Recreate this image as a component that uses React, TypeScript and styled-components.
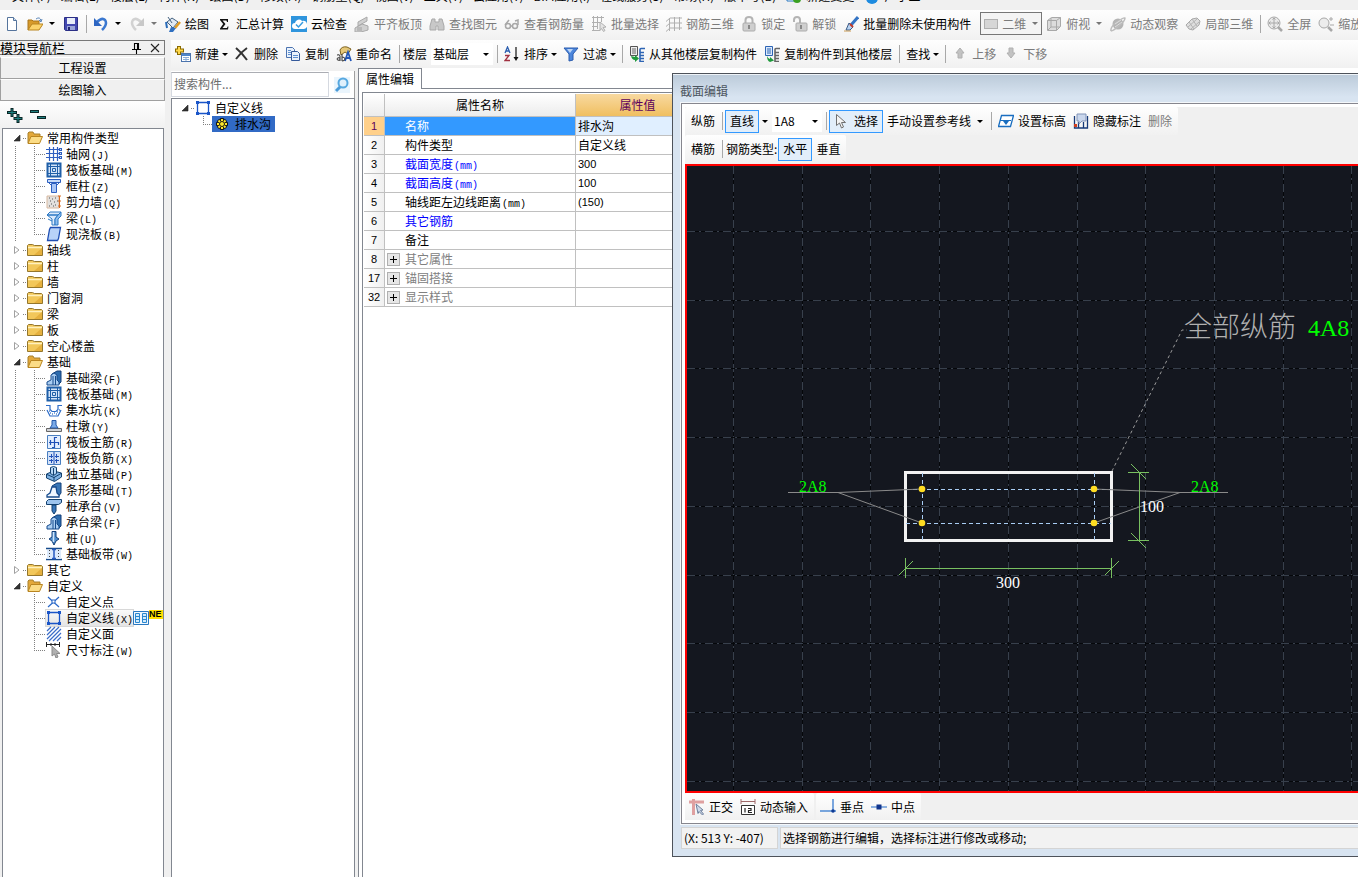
import React from "react";
import styled, { createGlobalStyle, css } from "styled-components";

const UI = `"Noto Sans CJK SC", "Noto Sans", sans-serif`;

const GlobalStyle = createGlobalStyle`
  * { box-sizing: border-box; }
  body { margin: 0; background: #f0f0f0; color: #000; font: 12px/16px ${UI}; }
  button, input, select { font: inherit; color: inherit; margin: 0; }
  button { border: 0; background: none; padding: 0; cursor: default; }
  ul { list-style: none; margin: 0; padding: 0; }
`;

/* ---------- icons, all on a 16 x 16 grid ---------- */

const leafBlue = "#1f5fa8";
const steel = "#4a7fc0";

const art: Record<string, React.ReactNode> = {
  newDoc: <><path d="M3.500 1.500h6l3 3v10h-9z" fill="#fff" stroke="#55749c" /><path d="M9.500 1.500v3h3" fill="#cfe0f5" stroke="#55749c" /></>,
  open: <><path d="M1 14V4h4l1 1h6v3" fill="#d79a2a" stroke="#a8741a" /><path d="M1 14l4-6h11l-4 6z" fill="#fbd36b" stroke="#b98520" /><path d="M9 3q4-3 5 2m-2-1l2 2 1-3" fill="none" stroke="#5c86b8" /></>,
  save: <><path d="M1.500 1.500h13v13h-12l-1-1z" fill="#4348b0" stroke="#2b2f86" /><path d="M4 2h8v6H4z" fill="#e8edf8" /><path d="M4 10h8v4H4z" fill="#9aa5d8" /><path d="M5 11h2v3H5z" fill="#22266e" /></>,
  undo: <><path d="M4 6q5-5 8-2 3 4-3 10" fill="none" stroke="#3b78d0" strokeWidth="2.500" /><path d="M1 2v8h8z" fill="#2e66c2" /></>,
  redo: <><path d="M12 6Q7 1 4 4q-3 4 3 10" fill="none" stroke="#d2d2d2" strokeWidth="2.500" /><path d="M15 2v8H7z" fill="#c8c8c8" /></>,
  paint: <><path d="M2 6l5-4 6 4-5 6z" fill="#dfe8f2" stroke="#44617f" /><path d="M3 1l4 6" stroke="#44617f" /><path d="M1 6l1 6" stroke="#2b6cb8" strokeWidth="2" /><path d="M15 6l-5 6" stroke="#e09a20" strokeWidth="2.500" /><path d="M6 11l5 1-3 4H4z" fill="#2f6fc0" /></>,
  sigma: <path d="M4 3h8v3h-1l-.5-1.500H6.500L9.500 8l-3 4h4.500l.6-1.600H12.500L12 13.500H4v-1L7.200 8 4 4z" fill="#111" />,
  cloud: <><path d="M0 0h16v16H0z" fill="#2f95dd" /><path d="M4 13a3 3 0 010-6 4 4 0 017-2 4 4 0 012 8z" fill="#fff" /><path d="M5 8.500l2.500 2.500L12 6" fill="none" stroke="#3b9de0" strokeWidth="1.500" /></>,
  align: <><path d="M4 6l9-5v4l-9 5zM1 12l7-4 6 2v4l-7 2H1z" fill="#d0d0d0" stroke="#a9a9a9" /><path d="M3 11h5v4H3z" fill="#b8b8b8" /></>,
  find: <path d="M3 3h3v3h4V3h3l2 7v4H9v-4H7v4H1v-4z" fill="#c8c8c8" stroke="#a9a9a9" />,
  glasses: <g fill="none" stroke="#a8a8a8" strokeWidth="1.500"><circle cx="4" cy="10" r="2.500" /><circle cx="11" cy="10" r="2.500" /><path d="M1 9l4-5M14 9V4l-3 1M6.500 10h2" /></g>,
  batch: <g fill="none" stroke="#b0b0b0"><path d="M1 1.500h12M1 6.500h8M1 10.500h6M2.500 0v14M6.500 0v13M10.500 0v6M1 14.500h8" /><path d="M9 6l6 5-3 .5 2 3-1.500 1-2-3-1.500 2z" fill="#e4e4e4" /></g>,
  rebar3d: <g fill="none" stroke="#b0b0b0"><path d="M0 5.500L4 2h12M0 10.500L4 7h12M0 15.500L4 12h12M3.500 2v13M8.500 1v14M13.500 1v13" /></g>,
  lock: <><path d="M4.500 8V4q0-3 3.500-3t3.500 3v4" fill="none" stroke="#b4b4b4" strokeWidth="2" /><rect x="2" y="7" width="12" height="8" rx="1" fill="#cfcfcf" stroke="#acacac" /><path d="M8 9v4" stroke="#888" strokeWidth="2" /></>,
  unlock: <><path d="M2 6V4q0-3 3-3t3 3v3" fill="none" stroke="#b4b4b4" strokeWidth="2" /><rect x="4" y="7" width="11" height="8" rx="1" fill="#cfcfcf" stroke="#acacac" /><path d="M9 9v4" stroke="#888" strokeWidth="2" /></>,
  brush: <><path d="M15 1L8 9" stroke="#3474c4" strokeWidth="3" /><path d="M6 7l4 4-3 3H3z" fill="#b9d4f2" stroke="#3a5b86" /><path d="M7 8l3 3" stroke="#c23a2a" strokeWidth="2" /><path d="M1 15h7" stroke="#c99a52" /></>,
  flat: <rect x="1.500" y="3.500" width="13" height="9" fill="#d6d6d6" stroke="#b0b0b0" />,
  cube: <><path d="M1.500 4.500l4-3h9v9l-4 4h-9z" fill="#dcdcdc" stroke="#a8a8a8" /><path d="M1.500 4.500h9v10M10.500 4.500l4-3M5 2v9l-3 3M5 11h9" fill="none" stroke="#a8a8a8" /></>,
  orbit: <><circle cx="8" cy="8" r="5.500" fill="#b4b4b4" /><path d="M1 15q-1-4 6-9t8-4q0 3-6 8t-8 5" fill="none" stroke="#bcbcbc" strokeWidth="1.500" /><path d="M5 8l6-4M5 11l7-5" stroke="#dcdcdc" /></>,
  local3d: <><path d="M1 9l6-6 5-1 3 3-1 4-6 5-4-1z" fill="#dedede" stroke="#a8a8a8" /><path d="M4 6l5 7M7 3l5 7M3 11l9-8M6 13l8-7" stroke="#b4b4b4" /></>,
  full: <g fill="none" stroke="#a8a8a8"><circle cx="7" cy="7" r="6" fill="#e9e9e9" /><path d="M7 2v10M2 7h10M5.500 3.500L7 2l1.500 1.500M5.500 10.500L7 12l1.500-1.500M3.500 5.500L2 7l1.500 1.500M10.500 5.500L12 7l-1.500 1.500" /><path d="M11 11l4 4" strokeWidth="2.500" /></g>,
  zoom: <g fill="none" stroke="#a8a8a8"><circle cx="6" cy="7" r="5" fill="#ececec" /><path d="M10 11l4 4" strokeWidth="2.500" /><path d="M11 3h4M13 1v4M12 9h4" /></g>,
  create: <><path d="M4 0v9M0 4.500h9" stroke="#8a6a00" strokeWidth="4" /><path d="M4 1v7M1 4.500h7" stroke="#ffd84a" strokeWidth="2" /><rect x="6.500" y="7.500" width="9" height="8" fill="#fff" stroke="#4c74ad" /><path d="M7 9h8" stroke="#4f86cc" strokeWidth="2" /><path d="M8 11.500h6M8 13.500h6M11 11v4" stroke="#8badd8" /></>,
  cross: <path d="M2 2q6 5 11 12M13 2Q7 6 2 13" fill="none" stroke="#333" strokeWidth="2" />,
  copy: <><path d="M1.500 1.500h6l2 2v8h-8z" fill="#eaf2fc" stroke="#4b73b0" /><path d="M6.500 5.500h6l2 2v7h-8z" fill="#eaf2fc" stroke="#34599a" /><path d="M3 4.500h3M3 6.500h3M3 8.500h3M8 9.500h5M8 11.500h5" stroke="#5d8fd0" /></>,
  rename: <><path d="M4 4q2-4 7-3l4 2-3 5-3-2-4 3z" fill="#e6c878" stroke="#7c6222" /><path d="M9 15l3-9 3 9M10 12h4" fill="none" stroke="#2156b8" strokeWidth="1.800" /><path d="M1 9q3-1 3 1v5M4 12q-3-1-3 1t3 1M6 8v7q3 0 3-2t-3-2" fill="none" stroke="#333" /></>,
  sort: <><path d="M1 7l2.500-6L6 7M2 5h3" fill="none" stroke="#2d5fb0" strokeWidth="1.300" /><path d="M1 9.500h4l-4 5h5" fill="none" stroke="#a03040" strokeWidth="1.300" /><path d="M12 1v12" stroke="#111" strokeWidth="1.200" /><path d="M9.500 11h5L12 15z" fill="#111" /></>,
  filter: <><path d="M1 2h14l-5 6v6l-4 1V8z" fill="#4c86dc" stroke="#2b5cae" /><path d="M4 3h6L7 7z" fill="#bcd5f6" /></>,
  copyFrom: <><path d="M1.500.5h7v9h-7z" fill="#eee" stroke="#555" /><path d="M3 3h4M3 5h4M3 7h4" stroke="#666" /><path d="M2 10l4 1V9l4 3.500L6 16v-2q-3 0-4-4z" fill="#1f9a3c" /><path d="M16 2.500h-4q-1 0-1 1v12h4M11 6.500h4M11 9.500h4M11 12.500h4" fill="none" stroke="#2d64b4" strokeWidth="1.600" /></>,
  copyTo: <><path d="M1.500.5h7v9h-7z" fill="#dbe9fb" stroke="#2d64b4" /><path d="M3 3h4M3 5h4M3 7h4" stroke="#2d64b4" /><path d="M3 10q1 3 3 3V11l4 3.500L6 16q-3-1-3-6z" fill="#1f9a3c" /><path d="M16 2.500h-4q-1 0-1 1v12h4M11 6.500h4M11 9.500h4M11 12.500h4" fill="none" stroke="#666" strokeWidth="1.600" /></>,
  up: <path d="M8 2l4 5h-2v5H6V7H4z" fill="#c2c2c2" stroke="#b0b0b0" />,
  down: <path d="M8 12L4 7h2V2h4v5h2z" fill="#c2c2c2" stroke="#b0b0b0" />,
  search: <><circle cx="9" cy="6" r="4.500" fill="#dff0fc" stroke="#56a8e0" strokeWidth="2" /><path d="M6 10l-4 4" stroke="#4b9bd8" strokeWidth="3" /></>,
  folder: <><path d="M.5 13.500V3.500l1-1h4l2 1h7l1 1v9z" fill="#f2c75a" stroke="#94762c" /><path d="M1 5.500h14" stroke="#fff0bd" strokeWidth="1.500" /><path d="M7 13h8V6z" fill="#dca02c" opacity=".6" /></>,
  folderOpen: <><path d="M1 13V3l1-1h4l1 2h6v3" fill="#e3a83a" stroke="#a8802c" /><path d="M1 13.500l3-7h11.500l-3 7z" fill="#fbdc86" stroke="#b98520" /></>,
  grid: <path d="M3.500 1v14M7.500 1v14M11.500 1v14M0 3.500h13M0 7.500h13M0 11.500h13M13.500 2.500h2v2h-2zM13.500 6.500h2v2h-2zM13.500 10.500h2v2h-2z" fill="none" stroke="#2f5fc0" strokeWidth="1.200" />,
  raft: <g fill="none" stroke={leafBlue}><rect x="1.500" y="1.500" width="13" height="13" fill="#d3e4f8" strokeWidth="2" /><path d="M4.500 2v12M11.500 2v12M2 4.500h12M2 11.500h12M6.500 6.500h3v3h-3z" /></g>,
  column: <><path d="M1.500 1.500h13v3h-13z" fill="#c9dcf8" stroke="#2c5fc0" /><path d="M5.500 5.500h5v9h-5z" fill="#a9c6f6" stroke="#2c5fc0" /><path d="M3 5l2 2M13 5l-2 2" stroke="#2c5fc0" /></>,
  shear: <><path d="M1 2h12v12H1z" fill="#e3e0dd" stroke="#d8b9a0" /><path d="M3 4h1M6 5h1M9 4h1M4 7h1M8 8h1M5 10h1M9 11h1M3 12h1M11 7h1M7 12h1" stroke="#555" /><path d="M12 2h3M13.500 2v12M12 7h3M12 12h3" stroke="#d86a20" /></>,
  beam: <><path d="M1 5l3-3h11l-3 3zM1 5l5 4v6h3V9l3-4z" fill="#dceafb" stroke="#2c78c4" /><path d="M12 5l3-3v4l-3 3v6H9V9z" fill="#8dbdee" stroke="#2c78c4" /><path d="M2 9l4 2" stroke="#2c78c4" /></>,
  slab: <path d="M4.500 1.500h10l-2 11-1 2h-10l2-11z" fill="#b8d2f8" stroke="#1f4fb4" strokeWidth="1.300" />,
  footBeam: <><path d="M6 4l5-3h4v11l-3 3z" fill="#2d6cae" stroke="#123f78" /><path d="M1 15v-3l4-2V5l3-2 3 2v5l2 2v3z" fill="#a9cdf2" stroke="#174b8c" /><path d="M7 6v9M9.500 6v9" stroke="#174b8c" /></>,
  pit: <><path d="M0 3.500h4v4l2 2h4l2-2v-4h4M1 8l3 6h8l3-6" fill="none" stroke="#2c6cc8" strokeWidth="1.200" /><path d="M3 9h1M4 11h1M6 12h1M8 11h1M10 12h1M11 10h1M13 8h1" stroke="#4f86d0" strokeWidth="1.300" /></>,
  pier: <><path d="M.5 10.500h15v3H.5z" fill="#d0d4da" stroke="#666" /><path d="M4 10l2-3V2.500h4V7l2 3z" fill="#7aaae8" stroke="#2458a8" /></>,
  mainBar: <><path d="M1.500 1.500h13v13h-13z" fill="#e4efff" stroke={steel} /><path d="M8.500 3v11M8.500 3.500H11M3 8.500h10M4.500 6v5M12.500 8v3M6 13.500h2.500" fill="none" stroke="#2050b8" strokeWidth="1.200" /></>,
  negBar: <><path d="M1.500 1.500h13v13h-13z" fill="#d3e2f8" stroke={steel} /><path d="M8 2v12M3 6.500h4M9 6.500h4M3 10.500h4M9 10.500h4M5.500 4v4M10.500 4v4M5.500 9v4M10.500 9v4" fill="none" stroke="#2050b8" /></>,
  isolated: <><path d="M0.500 8l7-3 8 2v4l-7 4.500-8-3.500z" fill="#7fb2e4" stroke="#12406e" /><path d="M1 8.500l7 3 7-4M8 11v4" fill="none" stroke="#12406e" /><path d="M4.500 1.500l3-1 3 1v6l-3 2-3-2z" fill="#b8d8f6" stroke="#12406e" /><path d="M7.500 2v7" stroke="#12406e" /></>,
  strip: <><path d="M6 4l5-3h4v10l-3 4z" fill="#3976b6" stroke="#123f78" /><path d="M1 15v-2l3-2 2-6h4l1 6 2 2v2z" fill="#eef6ff" stroke="#174b8c" strokeWidth="1.300" /></>,
  cap: <><path d="M.5 3.500l2-2h13v3l-3 2H.5z" fill="#9cc4ee" stroke="#12406e" /><path d="M6 7h4v6l-2 3-2-3z" fill="#3a78bc" stroke="#12406e" /></>,
  pile: <><path d="M6 1.500h4V7l3 2-3 2-2 4-2-4-3-2 3-2z" fill="#4d8ccc" stroke="#123f78" /><path d="M7.500 2v10" stroke="#d2e6fa" strokeWidth="1.500" /></>,
  band: <><path d="M0 2.500h16M0 13.500h16" stroke="#174b8c" strokeWidth="1.500" /><path d="M1 4h14v9H1z" fill="#dceafb" /><path d="M6 3.500h4M6 12.500h4M8 4v9" stroke="#2458c0" strokeWidth="1.500" /><path d="M3.500 4v9M12.500 4v9" stroke="#444" strokeDasharray="1 2" /></>,
  point: <><path d="M2 3l11 10M13 3L2 13" stroke="#2a68c8" strokeWidth="1.200" /><path d="M6 6h3v3H6z" fill="#fff" stroke="#2a68c8" /></>,
  line: <><path d="M2.500 3v10M13.500 3v10M3 2.500h10M3 13.500h10" stroke="#1a55c8" strokeWidth="1.300" /><path d="M1 1h3v3H1zM12 1h3v3h-3zM1 12h3v3H1zM12 12h3v3h-3z" fill="#1a55c8" /></>,
  area: <path d="M1 5l4-4M1 9l8-8M1 13l12-12M3 15L15 3M7 15l8-8M11 15l4-4" stroke="#3a6cc8" strokeWidth="1.200" />,
  dims: <><path d="M0 2.500h14M.5 0v5M13.500 0v5M5 1v3M9 1v3" stroke="#222" /><path d="M6 4v10l2.500-2 1.500 4 2-1-1.500-3.500H14z" fill="#b0b0b0" stroke="#8a8a8a" /></>,
  gear: <><path d="M8 2v12M2 8h12M4 4l8 8M12 4l-8 8" stroke="#111" strokeWidth="3.500" /><path d="M8 3v10M3 8h10M4.500 4.500l7 7M11.500 4.500l-7 7" stroke="#ffe92e" strokeWidth="2" /><circle cx="8" cy="8" r="2.500" fill="#ffe92e" stroke="#111" /></>,
  pointer: <path d="M2.500 1.500v11l3-2.500 2 5 2-1-2-4.500h4z" fill="#f4f4f4" stroke="#707070" />,
  level: <><path d="M3.500 2.500h12l-3 11H.5z" fill="#fff" stroke="#1a6ec0" strokeWidth="1.300" /><path d="M2 7.500h11" stroke="#1a6ec0" /><path d="M5 8h6l-3 4z" fill="#1a6ec0" /></>,
  hide: <><path d="M1.500 3v12h13V3M5.500 9v6M10.500 9v6" fill="none" stroke="#173a78" strokeWidth="1.300" /><path d="M4 1h9v7H9l-3 3V8H4z" fill="#c9d6ec" stroke="#8093b8" /><path d="M1 11h3v3H1z" fill="#d04020" /></>,
  ortho: <><path d="M0 3h15M4.500 0v16" stroke="#dfa0a0" strokeWidth="3" /><path d="M7 5l7 6-2.500.5 3 3.500-1 1-3.500-3.500-1 2z" fill="#cfd9e8" stroke="#6c7f9c" /></>,
  dyn: <><path d="M1 0v5M15 0v5M1 2.500h14" stroke="#a06a6a" /><path d="M1.500 6.500h13v9h-13z" fill="#fff" stroke="#333" /><path d="M5 9v4.500M8 9.500h3v2H8.500v2H12" fill="none" stroke="#222" strokeWidth="1.200" /></>,
  perp: <><path d="M13 0v12M0 12h16" stroke="#4f8ad4" strokeWidth="1.500" /><circle cx="13" cy="12" r="1.800" fill="#0d3a94" /></>,
  mid: <><path d="M0 8h16" stroke="#6a9ad8" strokeWidth="1.500" /><path d="M5.500 5.500h5v5h-5z" fill="#11348c" /></>,
  pin: <path d="M5.500 3v6M3 9.500h9M5 3.500h5M9.500 3v6M8.500 3v6M7.500 10v4" fill="none" stroke="#000" strokeWidth="1.100" />,
  shut: <path d="M4 4l8 8M12 4l-8 8" stroke="#222" strokeWidth="1.100" />,
  plusPlus: <><path d="M5 1v9M0 5.500h10M11 7v9M6.500 11.500h9" stroke="#0a2626" strokeWidth="3" /><path d="M5 2v7M1 5.500h8M11 8v7M7.500 11.500h7" stroke="#1d8080" /></>,
  minusMinus: <><path d="M0 4.500h9M7 10.500h9" stroke="#0a2626" strokeWidth="3" /><path d="M1 4.500h7M8 10.500h7" stroke="#1d8080" /></>,
  book: <><path d="M.5 1.500h15v13H.5z" fill="#f2f8fe" stroke="#2a78c0" /><path d="M2.500 3.500h4v9h-4zM9.500 3.500h4v9h-4zM3 6.500h3M10 6.500h3M3 9.500h3M10 9.500h3" fill="#d4ebfc" stroke="#2a88d0" /></>,
  change: <><path d="M1 1h10v12H1z" fill="#fff" stroke="#2a78c0" /><circle cx="11" cy="11" r="4" fill="#3aa020" /></>,
  helper: <circle cx="8" cy="10" r="6" fill="#1d8be0" />,
};

const Svg = styled.svg`display: block; flex: none;`;
const Icon = ({ name }: { name: string }) => (
  <Svg width="16" height="16" viewBox="0 0 16 16" fill="none" aria-hidden="true">{art[name]}</Svg>
);

/* ---------- shared controls ---------- */

const Tool = styled.button<{ $off?: boolean }>`
  display: flex;
  align-items: center;
  gap: 4px;
  flex: none;
  height: 22px;
  padding: 0 3px 0 4px;
  white-space: nowrap;
  color: ${(p) => (p.$off ? "#7b7b7b" : "#000")};
`;
const Toggle = styled(Tool)`
  height: 23px;
  padding: 0 4px;
  border: 1px solid #3399ff;
  background: #e2eefa;
`;
const ModeBox = styled(Tool)`
  width: 62px;
  height: 23px;
  margin-left: 6px;
  padding: 0 0 0 2px;
  gap: 3px;
  border: 1px solid #777;
  background: #f4f4f4;
`;
const Caret = styled.i<{ $spaced?: boolean; $off?: boolean }>`
  flex: none;
  border: solid transparent;
  border-width: 3px 3px 0;
  border-top-color: ${(p) => (p.$off ? "#777" : "#000")};
  margin: ${(p) => (p.$spaced ? "0 4px 0 3px" : "0 -1px")};
`;
const Divider = styled.span`
  flex: none;
  width: 1px;
  height: 18px;
  margin: 0 2px 0 4px;
  background: #a8a8a8;
`;
const FieldLabel = styled.label`flex: none; padding: 0 4px 0 1px; white-space: nowrap;`;
const Combo = styled.span<{ $w: number }>`
  display: flex;
  align-items: center;
  flex: none;
  width: ${(p) => p.$w}px;
  height: 22px;
  background: #fff;
`;
const Select = styled.select`
  flex: 1;
  min-width: 0;
  height: 22px;
  padding: 0 2px;
  border: 0;
  background: none;
  appearance: none;
`;

type ToolDef = { icon?: string; text?: string; off?: boolean; caret?: boolean };
const Tools = ({ items }: { items: ToolDef[] }) => (
  <>
    {items.map((t, i) => (
      <Tool key={i} $off={t.off} disabled={t.off} aria-label={t.text ?? t.icon}>
        {t.icon && <Icon name={t.icon} />}
        {t.text}
        {t.caret && <Caret $off={t.off} />}
      </Tool>
    ))}
  </>
);

/* ---------- page frame ---------- */

const Shell = styled.div`
  position: relative;
  display: flex;
  flex-direction: column;
  min-height: 100vh;
  overflow: hidden;
`;
const MenuBar = styled.nav`
  display: flex;
  align-items: flex-end;
  gap: 10px;
  height: 10px;
  padding: 0 0 6px 12px;
  overflow: hidden;
  & button { display: flex; gap: 4px; flex: none; white-space: nowrap; }
`;
const barFill = css`background: linear-gradient(#fefefe, #f1f1f1);`;
const Bar = styled.div`
  display: flex;
  align-items: center;
  overflow: hidden;
  ${barFill}
`;
const MainBar = styled(Bar)`height: 30px; padding-bottom: 3px;`;
const EditBar = styled(Bar)`height: 28px;`;
const Body = styled.div`display: flex; flex: 1;`;

/* ---------- navigation ---------- */

const Nav = styled.aside`
  display: flex;
  flex-direction: column;
  flex: none;
  width: 165px;
`;
const NavTitle = styled.header`
  display: flex;
  align-items: center;
  height: 15px;
  margin-bottom: 2px;
  border: 1px solid #777;
  border-left: 0;
  font-size: 13px;
  line-height: 13px;
  & h2 { flex: 1; margin: 0; font: inherit; }
  & button { width: 18px; display: flex; justify-content: center; }
`;
const NavButton = styled.button`
  height: 22px;
  border: 1px solid #a0a0a0;
  border-top-color: #fff;
  background: #f0f0f0;
`;
const NavTools = styled.div`
  display: flex;
  align-items: center;
  gap: 7px;
  height: 27px;
  padding-left: 7px;
  ${barFill}
`;
const Tree = styled.ul`
  flex: 1;
  margin: 0 1px 0 2px;
  padding: 1px 0 0;
  background: #fff;
  border: solid #828790;
  border-width: 1px 1px 0;
`;
const TreeRow = styled.div<{ $pad: number }>`
  display: flex;
  align-items: center;
  height: 16px;
  padding-left: ${(p) => p.$pad}px;
  white-space: nowrap;
`;
const dotsV = "repeating-linear-gradient(#808080 0 1px, transparent 1px 2px) 0 0 / 1px";
const dotsH = "repeating-linear-gradient(90deg, #808080 0 1px, transparent 1px 2px)";
const Rail = styled.span<{ $on: boolean }>`
  width: 19px;
  height: 16px;
  ${(p) => p.$on && css`background: ${dotsV} 16px no-repeat;`}
`;
const Branch = styled.span<{ $last: boolean; $w?: number }>`
  width: ${(p) => p.$w ?? 12}px;
  height: 16px;
  background: ${(p) => `${dotsV} ${p.$last ? 8 : 16}px no-repeat, ${dotsH} 0 8px / 100% 1px no-repeat`};
`;
const Stub = styled.span`
  width: 4px;
  height: 1px;
  margin: 0 0 0 2px;
  background: ${dotsH};
`;
const Expander = styled.button`display: flex; width: 8px;`;
const Name = styled.span`margin-left: 4px;`;
const Mono = styled.span`
  padding-left: 1px;
  font: 10px "Liberation Mono", monospace;
`;
const Leaf = styled.span<{ $on?: boolean }>`
  display: flex;
  align-items: center;
  ${(p) => p.$on && css`background: linear-gradient(#fafafa, #e4e4e4); box-shadow: 0 0 0 1px #d8d8d8;`}
`;
const Fresh = styled.b`
  align-self: flex-start;
  width: 14px;
  height: 9px;
  background: #ffe000;
  font: 700 9px/9px "Liberation Sans", sans-serif;
`;

const Arrow = ({ open }: { open: boolean }) => (
  <Svg width="8" height="8" viewBox="0 0 8 8">
    {open ? <path d="M7 1v6H1z" fill="#333" stroke="#222" strokeWidth=".6" /> : <path d="M1.500 0.500v7L6 4z" fill="#fff" stroke="#a0a0a0" />}
  </Svg>
);

type LeafDef = [icon: string, text: string, key?: string];
const groups: { text: string; items?: LeafDef[] }[] = [
  { text: "常用构件类型", items: [["grid", "轴网", "J"], ["raft", "筏板基础", "M"], ["column", "框柱", "Z"], ["shear", "剪力墙", "Q"], ["beam", "梁", "L"], ["slab", "现浇板", "B"]] },
  { text: "轴线" }, { text: "柱" }, { text: "墙" }, { text: "门窗洞" }, { text: "梁" }, { text: "板" }, { text: "空心楼盖" },
  { text: "基础", items: [["footBeam", "基础梁", "F"], ["raft", "筏板基础", "M"], ["pit", "集水坑", "K"], ["pier", "柱墩", "Y"], ["mainBar", "筏板主筋", "R"], ["negBar", "筏板负筋", "X"], ["isolated", "独立基础", "P"], ["strip", "条形基础", "T"], ["cap", "桩承台", "V"], ["footBeam", "承台梁", "F"], ["pile", "桩", "U"], ["band", "基础板带", "W"]] },
  { text: "其它" },
  { text: "自定义", items: [["point", "自定义点"], ["line", "自定义线", "X"], ["area", "自定义面"], ["dims", "尺寸标注", "W"]] },
];

const Navigator = () => (
  <Nav>
    <NavTitle>
      <h2>模块导航栏</h2>
      <button aria-label="固定"><Icon name="pin" /></button>
      <button aria-label="关闭"><Icon name="shut" /></button>
    </NavTitle>
    <NavButton>工程设置</NavButton>
    <NavButton>绘图输入</NavButton>
    <NavTools>
      <button aria-label="全部展开"><Icon name="plusPlus" /></button>
      <button aria-label="全部折叠"><Icon name="minusMinus" /></button>
    </NavTools>
    <Tree>
      {groups.map((g, gi) => (
        <li key={g.text + gi}>
          <TreeRow $pad={10}>
            <Expander aria-label={g.text}><Arrow open={!!g.items} /></Expander>
            <Stub />
            <Icon name={g.items ? "folderOpen" : "folder"} />
            <Name>{g.text}</Name>
          </TreeRow>
          {g.items && (
            <ul>
              {g.items.map(([icon, text, key], i) => {
                const active = text === "自定义线";
                return (
                  <li key={text}>
                    <TreeRow $pad={12}>
                      <Rail $on={gi < groups.length - 1} />
                      <Branch $last={i === g.items!.length - 1} />
                      <Leaf $on={active}>
                        <Icon name={icon} />
                        <Name>{text}{key && <Mono>({key})</Mono>}</Name>
                      </Leaf>
                      {active && <><Icon name="book" /><Fresh>NE</Fresh></>}
                    </TreeRow>
                  </li>
                );
              })}
            </ul>
          )}
        </li>
      ))}
    </Tree>
  </Nav>
);

/* ---------- component list ---------- */

const Main = styled.main`
  display: flex;
  flex-direction: column;
  flex: 1;
  min-width: 0;
  margin-left: 6px;
`;
const Columns = styled.div`display: flex; flex: 1; gap: 3px;`;
const ListPanel = styled.section`
  display: flex;
  flex-direction: column;
  flex: none;
  width: 184px;
  padding-top: 3px;
`;
const SearchRow = styled.div`
  display: flex;
  align-items: center;
  height: 27px;
  background: #fff;
  border-right: 1px solid #a0a0a0;
  & button { margin-left: 5px; background: #eaf5fd; }
`;
const SearchInput = styled.input`
  width: 158px;
  height: 25px;
  padding: 0 2px 2px;
  border: 1px solid #d5d9e0;
  border-top-color: #abadb3;
  background: #fff;
  &::placeholder { color: #6d6d6d; opacity: 1; }
`;
const ListTree = styled.ul`
  flex: 1;
  padding-top: 1px;
  background: #fff;
  border: solid #828790;
  border-width: 1px 1px 0;
`;
const Picked = styled.span`
  display: flex;
  align-items: center;
  gap: 5px;
  height: 16px;
  padding: 0 4px 0 2px;
  background: #316ac5;
`;

/* ---------- property table ---------- */

const Props = styled.section`
  display: flex;
  flex-direction: column;
  flex: 1;
  min-width: 0;
  background: #fff;
  border-left: 1px solid #828790;
`;
const TabStrip = styled.div`
  display: flex;
  height: 21px;
  &::after { content: ""; flex: 1; border-bottom: 1px solid #828790; }
`;
const Tab = styled.button`
  padding: 0 7px;
  border: solid #828790;
  border-width: 1px 1px 0 0;
`;
const TableFrame = styled.div`
  flex: 1;
  margin: 3px 0 0 3px;
  padding: 1px 0 0 1px;
  border: solid #828790;
  border-width: 1px 0 0 1px;
`;
const Table = styled.table`
  width: 336px;
  table-layout: fixed;
  border-spacing: 0;
  & th, & td {
    height: 19px;
    padding: 0 2px;
    border: solid #c0c0c0;
    border-width: 0 1px 1px 0;
    font-weight: 400;
    line-height: 16px;
    text-align: left;
    white-space: nowrap;
  }
  & thead th { height: 23px; text-align: center; background: linear-gradient(#fff, #ececec); }
`;
const ValueHead = styled.th`
  &&& { color: #5c005c; background: linear-gradient(#f8d9a0, #f0bf60); }
`;
const Index = styled.th<{ $on?: boolean }>`
  && { padding: 0; text-align: center; font: 11px/16px "Liberation Sans", sans-serif; color: ${(p) => (p.$on ? "#5c005c" : "#000")}; background: ${(p) => (p.$on ? "#ffd08a" : "linear-gradient(90deg, #fff, #f0f0f0)")}; }
`;
const NameCell = styled.td<{ $tone?: string; $on?: boolean }>`
  color: ${(p) => p.$tone ?? "#000"};
  background: ${(p) => (p.$on ? "#3399ff" : "#fff")};
`;
const NameLine = styled.div`display: flex; align-items: center; gap: 5px; height: 16px;`;
const Slot = styled.span`width: 13px; height: 13px; flex: none;`;
const Plus = styled.button`
  display: flex;
  flex: none;
  width: 13px;
  height: 13px;
  padding: 1px;
  border: 1px solid #b0b0b0;
  background: #e6e6e6;
`;
const ValueCell = styled.td<{ $on?: boolean }>`
  background: ${(p) => (p.$on ? "#e0efff" : "#fff")};
`;
const Num = styled.span`
  display: block;
  font: 11px/16px "Liberation Sans", sans-serif;
`;

const rows: { n: number; name: string; unit?: boolean; tone?: string; text?: string; num?: string; more?: boolean }[] = [
  { n: 1, name: "名称", tone: "#fff", text: "排水沟" },
  { n: 2, name: "构件类型", text: "自定义线" },
  { n: 3, name: "截面宽度", unit: true, tone: "#0000ff", num: "300" },
  { n: 4, name: "截面高度", unit: true, tone: "#0000ff", num: "100" },
  { n: 5, name: "轴线距左边线距离", unit: true, num: "(150)" },
  { n: 6, name: "其它钢筋", tone: "#0000ff" },
  { n: 7, name: "备注" },
  { n: 8, name: "其它属性", tone: "#808080", more: true },
  { n: 17, name: "锚固搭接", tone: "#808080", more: true },
  { n: 32, name: "显示样式", tone: "#808080", more: true },
];

const IndexCol = styled.col`width: 21px;`;
const NameCol = styled.col`width: 191px;`;

const PropertyTable = () => (
  <Props>
    <TabStrip><Tab>属性编辑</Tab></TabStrip>
    <TableFrame>
      <Table>
        <colgroup><IndexCol /><NameCol /><col /></colgroup>
        <thead><tr><th /><th>属性名称</th><ValueHead>属性值</ValueHead></tr></thead>
        <tbody>
          {rows.map((r) => (
            <tr key={r.n}>
              <Index scope="row" $on={r.n === 1}>{r.n}</Index>
              <NameCell $tone={r.tone} $on={r.n === 1}>
                <NameLine>
                  {r.more ? (
                    <Plus aria-label={"展开" + r.name}>
                      <Svg width="9" height="9" viewBox="0 0 9 9"><path d="M4.500 1v7M1 4.500h7" stroke="#000" /></Svg>
                    </Plus>
                  ) : <Slot />}
                  <span>{r.name}{r.unit && <Mono>(mm)</Mono>}</span>
                </NameLine>
              </NameCell>
              <ValueCell $on={r.n === 1}>{r.text}{r.num && <Num>{r.num}</Num>}</ValueCell>
            </tr>
          ))}
        </tbody>
      </Table>
    </TableFrame>
  </Props>
);

/* ---------- section editor window ---------- */

const Dialog = styled.section`
  position: absolute;
  top: 73px;
  bottom: 20px;
  left: 672px;
  right: -8px;
  display: flex;
  flex-direction: column;
  padding: 0 0 7px;
  border: 1px solid #4d525a;
  background: #d8e4f1;
`;
const DialogTitle = styled.h1`
  flex: none;
  height: 28px;
  margin: 0;
  padding: 7px 0 0 7px;
  border-top: 1px solid #eef3f8;
  background: linear-gradient(#bccbda, #d8e4f1 22px);
  color: #4c5560;
  font: 12px/18px ${UI};
`;
const DialogBody = styled.div`
  display: flex;
  flex-direction: column;
  flex: 1;
  min-height: 0;
  margin: 1px 0 3px 8px;
  padding: 3px;
  border: 1px solid #86868e;
  background: #f0f0f0;
  box-shadow: inset 0 0 0 3px #fff, 0 0 0 1px #f4f7fa;
`;
const BarRow = styled.div<{ $short?: boolean }>`
  display: flex;
  flex: none;
  gap: 2px;
  height: ${(p) => (p.$short ? 27 : 28)}px;
`;
const DialogBar = styled(Bar)<{ $tight?: boolean }>`
  padding: 0 3px 0 ${(p) => (p.$tight ? 0 : 2)}px;
  border-radius: 2px;
`;
const BarLabel = styled.span`padding: 0 1px;`;
const Canvas = styled.div`
  flex: 1;
  min-height: 0;
  margin-top: 1px;
  border: 2px solid #f00;
  background: #14171f;
  overflow: hidden;
`;
const Drawing = styled.svg`display: block; width: 100%; height: 100%;`;
const Status = styled.footer`
  display: flex;
  flex: none;
  gap: 2px;
  height: 22px;
  margin-left: 8px;
`;
const StatusCell = styled.span<{ $w?: number }>`
  flex: ${(p) => (p.$w ? `0 0 ${p.$w}px` : 1)};
  padding: 2px 0 0 2px;
  border: 1px solid #d4d4d4;
  background: #f2f2f2;
  white-space: nowrap;
`;

const steps = (from: number, count: number) => Array.from({ length: count }, (_, i) => Math.round(from + i * 68.7) + 0.5);
const GridLine = ({ d }: { d: string }) => (
  <><path d={d} stroke="#05070a" /><path d={d} stroke="#38404c" strokeDasharray="8 4 2 4" /></>
);

const SectionDrawing = () => (
  <Drawing aria-label="截面图">
    <g transform="translate(-687 -166)" fill="none" fontFamily='"Liberation Serif", serif' fontSize="16">
      {steps(733, 26).map((x) => <GridLine key={x} d={`M${x} 166V1600`} />)}
      {steps(231, 18).map((y) => <GridLine key={y} d={`M687 ${y}H2600`} />)}
      <path d="M1112 471L1182 330h5" stroke="#9a9a9a" strokeDasharray="3 3" />
      <rect x="905.500" y="472.500" width="206" height="68" stroke="#f2f2f2" strokeWidth="3" />
      <path d="M922.500 473v67M1094.500 473v67M906 489.500H1111M906 523.500H1111" stroke="#a8cdf4" strokeDasharray="4 3" />
      <path d="M788 492.500h50l84-3.500M838 492.500L922 523M1228 492.500h-48L1094 489M1180 492.500L1094 523" stroke="#8a8a8a" />
      <g fill="#ffdd22">
        <circle cx="922" cy="489" r="3.300" /><circle cx="1094" cy="489" r="3.300" />
        <circle cx="922" cy="523" r="3.300" /><circle cx="1094" cy="523" r="3.300" />
      </g>
      <path d="M905 568.500h207M905.500 558v20M1111.500 558v20M899 575l14-14M1105 575l14-14M1139.500 472v68M1128 472.500h21M1128 540.500h21M1131 464l15 15M1131 533l15 15" stroke="#78c060" />
      <g fill="#fff"><text x="1140" y="512">100</text><text x="996" y="588">300</text></g>
      <g fill="#0f0"><text x="799" y="492">2A8</text><text x="1191" y="492">2A8</text><text x="1308" y="336" fontSize="24">4A8</text></g>
      <text x="1184" y="337" fill="#b0b0b0" fontFamily='"Noto Sans CJK SC", sans-serif' fontWeight="300" fontSize="28">全部纵筋</text>
    </g>
  </Drawing>
);

const SectionEditor = () => (
  <Dialog aria-label="截面编辑">
    <DialogTitle>截面编辑</DialogTitle>
    <DialogBody>
      <BarRow>
        <DialogBar>
          <Tool>纵筋</Tool>
          <Divider />
          <Toggle>直线</Toggle>
          <Caret $spaced />
          <Combo $w={50}>
            <Select aria-label="钢筋规格" defaultValue="1A8"><option>1A8</option></Select>
            <Caret $spaced />
          </Combo>
          <Divider />
          <Toggle><Icon name="pointer" />选择</Toggle>
          <Tool>手动设置参考线</Tool>
          <Caret $spaced />
          <Divider />
          <Tools items={[{ icon: "level", text: "设置标高" }, { icon: "hide", text: "隐藏标注" }, { text: "删除", off: true }]} />
        </DialogBar>
      </BarRow>
      <BarRow>
        <DialogBar>
          <Tool>横筋</Tool>
          <Divider />
          <BarLabel>钢筋类型:</BarLabel>
          <Toggle>水平</Toggle>
          <Tool>垂直</Tool>
        </DialogBar>
      </BarRow>
      <Canvas><SectionDrawing /></Canvas>
      <BarRow $short>
        <DialogBar $tight><Tools items={[{ icon: "ortho", text: "正交" }, { icon: "dyn", text: "动态输入" }]} /></DialogBar>
        <DialogBar $tight><Tools items={[{ icon: "perp", text: "垂点" }, { icon: "mid", text: "中点" }]} /></DialogBar>
      </BarRow>
    </DialogBody>
    <Status>
      <StatusCell $w={97}>(X: 513 Y: -407)</StatusCell>
      <StatusCell>选择钢筋进行编辑，选择标注进行修改或移动;</StatusCell>
    </Status>
  </Dialog>
);

/* ---------- page ---------- */

const menus = ["文件(F)", "编辑(E)", "楼层(L)", "构件(N)", "绘图(D)", "修改(M)", "钢筋量(Q)", "视图(V)", "工具(T)", "云应用(Y)", "BIM应用(I)", "在线服务(S)", "帮助(H)", "版本号(B)"];

export default function App() {
  return (
    <Shell>
      <GlobalStyle />
      <MenuBar>
        {menus.map((m) => <button key={m}>{m}</button>)}
        <button><Icon name="change" />新建变更</button>
        <button><Icon name="helper" />广小二</button>
      </MenuBar>
      <MainBar>
        <Tools items={[{ icon: "newDoc" }, { icon: "open" }]} />
        <Caret $spaced />
        <Tools items={[{ icon: "save" }]} />
        <Divider />
        <Tools items={[{ icon: "undo" }]} />
        <Caret $spaced />
        <Tools items={[{ icon: "redo", off: true }]} />
        <Caret $spaced $off />
        <Tools
          items={[
            { icon: "paint", text: "绘图" }, { icon: "sigma", text: "汇总计算" }, { icon: "cloud", text: "云检查" },
            { icon: "align", text: "平齐板顶", off: true }, { icon: "find", text: "查找图元", off: true },
            { icon: "glasses", text: "查看钢筋量", off: true }, { icon: "batch", text: "批量选择", off: true },
            { icon: "rebar3d", text: "钢筋三维", off: true }, { icon: "lock", text: "锁定", off: true },
            { icon: "unlock", text: "解锁", off: true }, { icon: "brush", text: "批量删除未使用构件" },
          ]}
        />
        <ModeBox $off><Icon name="flat" />二维<Caret $spaced $off /></ModeBox>
        <Tools items={[{ icon: "cube", text: "俯视", off: true }]} />
        <Caret $spaced $off />
        <Tools items={[{ icon: "orbit", text: "动态观察", off: true }, { icon: "local3d", text: "局部三维", off: true }]} />
        <Divider />
        <Tools items={[{ icon: "full", text: "全屏", off: true }, { icon: "zoom", text: "缩放", off: true }]} />
      </MainBar>
      <Body>
        <Navigator />
        <Main>
          <EditBar>
            <Tools items={[{ icon: "create", text: "新建", caret: true }, { icon: "cross", text: "删除" }, { icon: "copy", text: "复制" }, { icon: "rename", text: "重命名" }]} />
            <Divider />
            <FieldLabel htmlFor="floor">楼层</FieldLabel>
            <Combo $w={62}>
              <Select id="floor" defaultValue="基础层"><option>基础层</option></Select>
              <Caret $spaced />
            </Combo>
            <Divider />
            <Tools items={[{ icon: "sort", text: "排序", caret: true }, { icon: "filter", text: "过滤", caret: true }]} />
            <Divider />
            <Tools items={[{ icon: "copyFrom", text: "从其他楼层复制构件" }, { icon: "copyTo", text: "复制构件到其他楼层" }]} />
            <Divider />
            <Tools items={[{ text: "查找", caret: true }]} />
            <Divider />
            <Tools items={[{ icon: "up", text: "上移", off: true }, { icon: "down", text: "下移", off: true }]} />
          </EditBar>
          <Columns>
            <ListPanel>
              <SearchRow>
                <SearchInput aria-label="搜索构件" placeholder="搜索构件..." />
                <button aria-label="搜索"><Icon name="search" /></button>
              </SearchRow>
              <ListTree>
                <li>
                  <TreeRow $pad={9}>
                    <Expander aria-label="自定义线"><Arrow open /></Expander>
                    <Stub />
                    <Icon name="line" />
                    <Name>自定义线</Name>
                  </TreeRow>
                  <ul>
                    <li>
                      <TreeRow $pad={31}>
                        <Branch $last $w={9} />
                        <Picked><Icon name="gear" />排水沟</Picked>
                      </TreeRow>
                    </li>
                  </ul>
                </li>
              </ListTree>
            </ListPanel>
            <PropertyTable />
          </Columns>
        </Main>
      </Body>
      <SectionEditor />
    </Shell>
  );
}
